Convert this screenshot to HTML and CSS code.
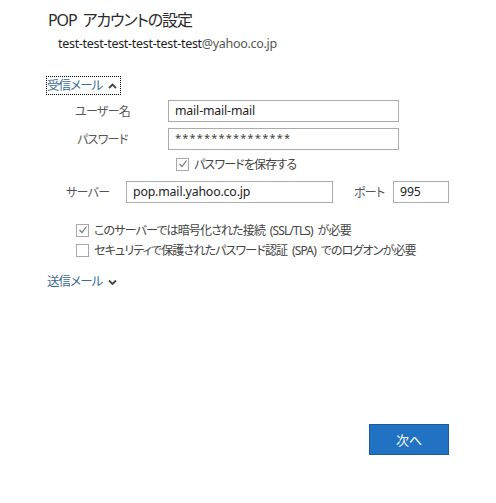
FILE: index.html
```html
<!DOCTYPE html>
<html lang="ja">
<head>
<meta charset="utf-8">
<link rel="stylesheet" href="styles.css">
</head>
<body>
<div class="page">
  <h1 class="title">POP アカウントの設定</h1>
  <div class="email"><span class="user">test-test-test-test-test-test</span><span class="domain">@yahoo.co.jp</span></div>

  <div class="toggle focused">受信メール
    <svg class="chev" width="9" height="6" viewBox="0 0 9 6"><polyline points="1,5 4.5,1.5 8,5" fill="none" stroke="#444" stroke-width="1.8"/></svg>
  </div>

  <div class="rows">
    <div class="row">
      <span class="label l-user">ユーザー名</span>
      <div class="input w-user">mail-mail-mail</div>
    </div>
    <div class="row">
      <span class="label l-pass">パスワード</span>
      <div class="input w-user pass">****************</div>
    </div>
    <div class="check-row save">
      <span class="box"><svg width="10" height="10" viewBox="0 0 10 10"><polyline points="1.5,5 4,7.5 8.5,1.5" fill="none" stroke="#777" stroke-width="1.2"/></svg></span>
      <span class="ctext">パスワードを保存する</span>
    </div>
    <div class="row server">
      <span class="label l-server">サーバー</span>
      <div class="input w-server">pop.mail.yahoo.co.jp</div>
      <span class="label l-port">ポート</span>
      <div class="input w-port">995</div>
    </div>
    <div class="check-row opt first">
      <span class="box"><svg width="10" height="10" viewBox="0 0 10 10"><polyline points="1.5,5 4,7.5 8.5,1.5" fill="none" stroke="#777" stroke-width="1.2"/></svg></span>
      <span class="ctext">このサーバーでは暗号化された接続 (SSL/TLS) が必要</span>
    </div>
    <div class="check-row opt">
      <span class="box"></span>
      <span class="ctext">セキュリティで保護されたパスワード認証 (SPA) でのログオンが必要</span>
    </div>
  </div>

  <div class="toggle send">送信メール
    <svg class="chev" width="9" height="6" viewBox="0 0 9 6"><polyline points="1,1.5 4.5,5 8,1.5" fill="none" stroke="#444" stroke-width="1.8"/></svg>
  </div>

  <div class="footer">
    <button class="next">次へ</button>
  </div>
</div>
</body>
</html>
```

FILE: styles.css
```css
* { box-sizing: border-box; }
html, body { margin: 0; padding: 0; background: #fff; }
body {
  font-family: "Noto Sans", "Noto Sans CJK JP", sans-serif;
  font-feature-settings: "palt";
  color: #333;
  width: 496px;
  height: 503px;
  overflow: hidden;
}
.page {
  display: flex;
  flex-direction: column;
  padding-top: 9px;
}
.title {
  margin: 0 0 0 48px;
  font-weight: normal;
  font-size: 16px;
  letter-spacing: -1.1px;
  word-spacing: 3px;
  line-height: 22px;
  color: #2b2b2b;
}
.email {
  margin: 4px 0 0 58px;
  font-size: 12.5px;
  letter-spacing: -0.3px;
  line-height: 18px;
}
.email .user { color: #1e1e1e; }
.email .domain { color: #555; }

.toggle {
  display: flex;
  align-items: center;
  gap: 6px;
  margin-left: 47px;
  font-size: 12.5px;
  letter-spacing: -0.9px;
  color: #3a6a93;
  line-height: 17px;
  height: 17px;
  padding: 0 3px 0 0;
  align-self: flex-start;
}
.toggle.focused {
  margin-top: 24px;
  outline: 1px dotted #000;
  outline-offset: 0;
}
.chev { display: block; margin-top: 1px; }

.rows {
  display: flex;
  flex-direction: column;
  margin-top: 6px;
}
.row {
  display: flex;
  align-items: center;
  height: 22px;
}
.row + .row { margin-top: 6px; }
.label {
  font-size: 12px;
  letter-spacing: -0.7px;
  color: #555;
}
.l-user { margin-left: 75px; width: 93px; }
.l-pass { margin-left: 77px; width: 91px; }
.l-server { margin-left: 66px; width: 60px; }
.l-port { margin-left: 21px; width: 39px; }

.input {
  height: 22px;
  border: 1px solid #ababab;
  font-size: 12.3px;
  letter-spacing: -0.15px;
  color: #222;
  padding-left: 6px;
  line-height: 20px;
  display: flex;
  align-items: center;
}
.w-user { width: 231px; }
.w-server { width: 207px; }
.w-port { width: 56px; }
.pass { font-size: 11px; letter-spacing: 1.2px; color: #444; padding-bottom: 2px; }

.row.server { margin-top: 8px; }

.check-row {
  display: flex;
  align-items: center;
  height: 18px;
  font-size: 12px;
  letter-spacing: -0.85px;
  word-spacing: 2.5px;
  color: #444;
}
.check-row.save { margin-left: 176px; margin-top: 5px; }
.check-row.opt.first { margin-top: 18px; }
.check-row.opt { margin-left: 76px; margin-top: 2px; }
.box {
  width: 13px;
  height: 13px;
  border: 1px solid #a8a8a8;
  display: flex;
  align-items: center;
  justify-content: center;
  margin-right: 5px;
  background: #fff;
}
.box svg { display: block; }

.toggle.send { margin-top: 14px; }

.footer {
  display: flex;
  justify-content: flex-end;
  padding-right: 47px;
  margin-top: 134px;
}
.next {
  width: 80px;
  height: 31px;
  background: #2272c3;
  border: 1px solid #1b5c9c;
  color: #fff;
  font-family: "Noto Sans CJK JP", sans-serif;
  font-feature-settings: "palt";
  font-size: 13px;
  padding: 0;
}
```
